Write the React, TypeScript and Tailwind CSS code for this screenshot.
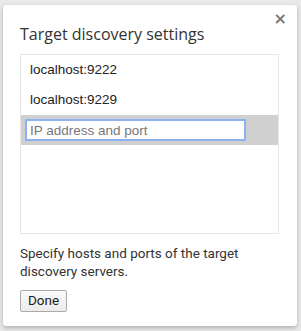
import React from "react";

const hosts = ["localhost:9222", "localhost:9229"];

export default function App() {
  return (
    <div className="w-[301px] h-[331px] bg-[#e9e9e9] pt-[5px] pl-[3px] overflow-hidden">
      <div className="relative w-[294px] h-[321px] bg-white rounded-[3px] shadow-[0_2px_4px_rgba(0,0,0,0.25)] pl-[17px] pt-[17px] font-['Roboto',sans-serif] text-[#333]">
        <button className="absolute right-[10px] top-[6px] text-[#777] text-[16px] leading-none font-bold font-['DejaVu_Sans',sans-serif]">
          ×
        </button>
        <h1 className="text-[16px] leading-[24px] text-[#333] font-['Open_Sans',sans-serif]">
          Target discovery settings
        </h1>
        <div className="mt-[8px] w-[259px] h-[180px] border border-[#e6e6e6] font-['Liberation_Sans',sans-serif] text-[13.5px] text-[#222]">
          {hosts.map((h) => (
            <div key={h} className="h-[30px] pl-[9px] flex items-center">
              {h}
            </div>
          ))}
          <div className="h-[30px] bg-[#d0d0d0] flex items-center pl-[4px]">
            <input
              className="w-[221px] h-[22px] border-2 border-[#8fb1f1] bg-white px-[3px] text-[13.5px] outline-none placeholder:text-[#777]"
              placeholder="IP address and port"
            />
          </div>
        </div>
        <p className="mt-[10px] w-[240px] text-[13.5px] leading-[18px] text-[#333]">
          Specify hosts and ports of the target discovery servers.
        </p>
        <button className="mt-[10px] w-[47px] h-[22px] border border-[#aaa] rounded-[2px] bg-gradient-to-b from-[#fafafa] to-[#ececec] text-[13.5px] text-[#222] leading-none">
          Done
        </button>
      </div>
    </div>
  );
}
